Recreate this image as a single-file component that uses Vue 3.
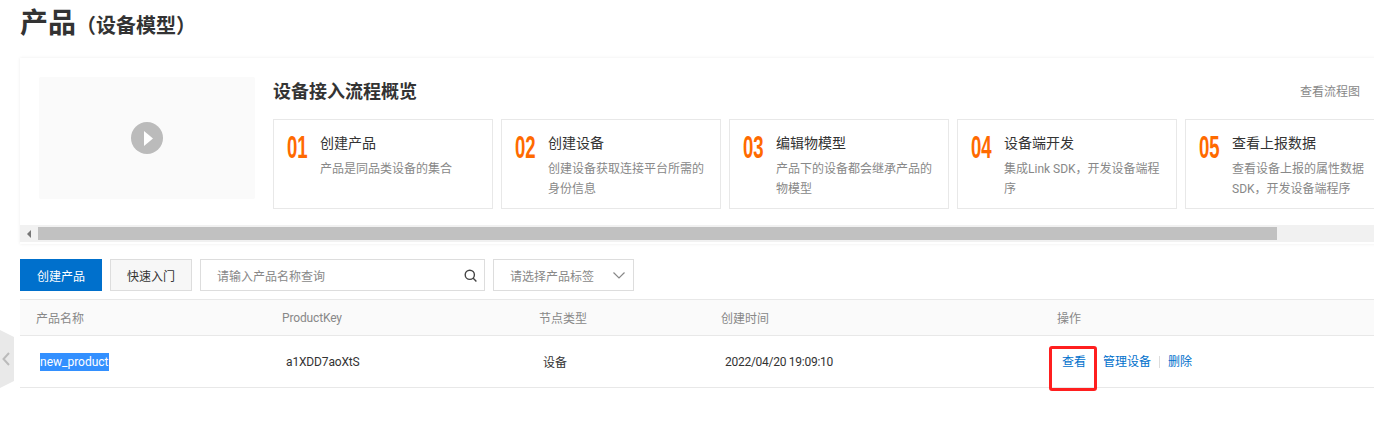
<template>
	<div class="page">
		<h1 class="title">产品<small>（设备模型）</small></h1>

		<section class="guide">
			<div class="guide-body">
				<div class="video">
					<svg width="32" height="32" viewBox="0 0 32 32">
						<circle cx="16" cy="16" r="16" fill="#bbb" />
						<path d="M13 9 L22 16.5 L13 24 Z" fill="#fff" />
					</svg>
				</div>
				<div class="flow">
					<div class="flow-head">
						<h2>设备接入流程概览</h2>
						<a class="flow-link">查看流程图</a>
					</div>
					<div class="cards">
						<div v-for="step in steps" :key="step.no" class="card">
							<div class="no"><span>{{ step.no }}</span></div>
							<div class="card-text">
								<div class="card-title">{{ step.title }}</div>
								<div class="card-desc">{{ step.desc }}</div>
							</div>
						</div>
					</div>
				</div>
			</div>
			<div class="scrollbar">
				<div class="scroll-left"><i></i></div>
				<div class="scroll-thumb"></div>
			</div>
		</section>

		<div class="toolbar">
			<button class="btn primary">创建产品</button>
			<button class="btn">快速入门</button>
			<div class="search">
				<span>请输入产品名称查询</span>
				<svg width="13" height="13" viewBox="0 0 13 13" fill="none" stroke="#444" stroke-width="1.4">
					<circle cx="5.8" cy="5.8" r="4.6" />
					<path d="M9 9 L12.4 12.4" />
				</svg>
			</div>
			<div class="select">
				<span>请选择产品标签</span>
				<svg width="12" height="7" viewBox="0 0 12 7" fill="none" stroke="#888" stroke-width="1.2">
					<path d="M0.5 0.5 L6 6 L11.5 0.5" />
				</svg>
			</div>
		</div>

		<div class="table">
			<div class="row head">
				<div>产品名称</div>
				<div class="tight">ProductKey</div>
				<div>节点类型</div>
				<div>创建时间</div>
				<div>操作</div>
			</div>
			<div class="row body">
				<div><span class="selected">new_product</span></div>
				<div class="tight">a1XDD7aoXtS</div>
				<div>设备</div>
				<div class="date">2022/04/20 19:09:10</div>
				<div class="actions">
					<a>查看</a><a>管理设备</a><a>删除</a>
					<i class="mark"></i>
				</div>
			</div>
		</div>

		<div class="side-tab">
			<svg width="8" height="14" viewBox="0 0 8 14" fill="none" stroke="#bbb" stroke-width="2">
				<path d="M7 1 L1.5 7 L7 13" />
			</svg>
		</div>
	</div>
</template>

<script setup>
const steps = [
	{ no: '01', title: '创建产品', desc: '产品是同品类设备的集合' },
	{ no: '02', title: '创建设备', desc: '创建设备获取连接平台所需的身份信息' },
	{ no: '03', title: '编辑物模型', desc: '产品下的设备都会继承产品的物模型' },
	{ no: '04', title: '设备端开发', desc: '集成Link SDK，开发设备端程序' },
	{ no: '05', title: '查看上报数据', desc: '查看设备上报的属性数据SDK，开发设备端程序' },
];
</script>

<style>
html,
body {
	margin: 0;
	background: #fff;
	overflow: hidden;
}
</style>

<style scoped>
.page {
	position: relative;
	width: 1374px;
	height: 430px;
	overflow: hidden;
	padding: 7px 0 0 20px;
	box-sizing: border-box;
	font-family: Roboto, "Noto Sans CJK SC", sans-serif;
	font-size: 12px;
	color: #333;
}

.title {
	margin: 0;
	height: 34px;
	line-height: 34px;
	font-size: 28px;
	font-weight: 700;
	color: #333;
}

.title small {
	font-size: 20px;
}

.guide {
	margin-top: 17px;
	margin-right: -20px;
	height: 186px;
	box-shadow: 0 0 3px rgba(0, 0, 0, 0.08);
	overflow: hidden;
}

.guide-body {
	display: flex;
	height: 167px;
	padding: 19px 0 0 19px;
	box-sizing: border-box;
}

.video {
	flex: none;
	width: 216px;
	height: 122px;
	margin-right: 18px;
	background: #fafafa;
	border-radius: 2px;
	display: flex;
	align-items: center;
	justify-content: center;
}

.flow {
	flex: none;
	width: 1132px;
}

.flow-head {
	display: flex;
	justify-content: space-between;
	align-items: center;
	height: 30px;
	margin-top: -2px;
	margin-bottom: 14px;
	width: 1087px;
}

.flow-head h2 {
	margin: 0;
	font-size: 18px;
	font-weight: 700;
	color: #333;
}

.flow-link {
	color: #888;
}

.cards {
	display: flex;
	gap: 8px;
}

.card {
	flex: none;
	display: flex;
	width: 220px;
	height: 90px;
	padding: 13px 10px 0 13px;
	border: 1px solid #e8e8e8;
	box-sizing: border-box;
}

.no {
	flex: none;
	width: 33px;
	margin-top: -1px;
	font-family: "Liberation Sans", sans-serif;
	font-size: 32px;
	font-weight: 700;
	line-height: 30px;
	color: #ff6a00;
}

.no span {
	display: inline-block;
	transform: scaleX(0.58);
	transform-origin: left center;
}

.card-title {
	font-size: 14px;
	line-height: 20px;
	color: #333;
}

.card-desc {
	margin-top: 6px;
	line-height: 20px;
	color: #888;
}

.scrollbar {
	display: flex;
	height: 17px;
	background: #f1f1f1;
	padding: 2px 0;
	box-sizing: border-box;
}

.scroll-left {
	width: 18px;
	display: flex;
	align-items: center;
	justify-content: center;
}

.scroll-left i {
	border: 4px solid transparent;
	border-left-width: 0;
	border-right-color: #777;
}

.scroll-thumb {
	width: 1239px;
	background: #c1c1c1;
}

.toolbar {
	display: flex;
	gap: 8px;
	margin-top: 15px;
	height: 32px;
}

.btn {
	width: 82px;
	height: 32px;
	padding: 0;
	border: 1px solid #ddd;
	background: #f7f7f7;
	font: inherit;
	color: #333;
}

.btn.primary {
	background: #0070cc;
	border-color: #0070cc;
	color: #fff;
}

.search,
.select {
	display: flex;
	align-items: center;
	justify-content: space-between;
	height: 32px;
	box-sizing: border-box;
	border: 1px solid #ddd;
	color: #888;
}

.search {
	width: 285px;
	padding: 0 7px 0 16px;
}

.select {
	width: 141px;
	padding: 0 8px 0 16px;
}

.table {
	margin-top: 8px;
	margin-right: -20px;
}

.row {
	display: grid;
	grid-template-columns: 246px 257px 182px 336px 1fr;
	align-items: center;
	box-sizing: border-box;
}

.row.head {
	height: 37px;
	padding-left: 16px;
	background: #fafafa;
	border-top: 1px solid #e8e8e8;
	border-bottom: 1px solid #e8e8e8;
	color: #888;
}

.row.body {
	height: 52px;
	padding-left: 20px;
	border-bottom: 1px solid #e8e8e8;
	color: #333;
}

.tight {
	letter-spacing: -0.15px;
}

.date {
	letter-spacing: -0.27px;
}

.selected {
	display: inline-block;
	height: 18px;
	line-height: 18px;
	background: #3390ff;
	color: #fff;
}

.actions {
	position: relative;
	display: flex;
	align-items: center;
	margin-left: 1px;
}

.actions a {
	color: #0070cc;
	line-height: 12px;
	padding: 0 8px;
	border-left: 1px solid #ddd;
}

.actions a:first-child {
	padding-left: 0;
	border-left: 0;
}

.mark {
	position: absolute;
	left: -13px;
	top: -10px;
	width: 48px;
	height: 45px;
	box-sizing: border-box;
	border: 3px solid #ff1f1f;
	border-radius: 3px;
}

.side-tab {
	position: absolute;
	left: 0;
	top: 330px;
	width: 14px;
	height: 58px;
	display: flex;
	align-items: center;
	padding-left: 2px;
	box-sizing: border-box;
	background: #e9e9e9;
	clip-path: polygon(0 0, 100% 12%, 100% 88%, 0 100%);
}
</style>
